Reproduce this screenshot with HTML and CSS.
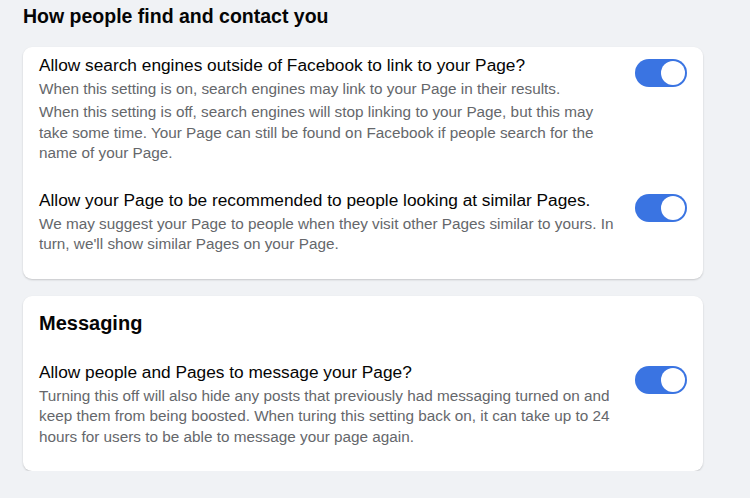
FILE: index.html
```html
<!DOCTYPE html>
<html>
<head>
<meta charset="utf-8">
<link rel="stylesheet" href="styles.css">
</head>
<body>
<div class="page">
  <h2 class="section-title">How people find and contact you</h2>
  <div class="card card-first">
    <div class="row">
      <div class="text">
        <div class="title">Allow search engines outside of Facebook to link to your Page?</div>
        <p class="desc">When this setting is on, search engines may link to your Page in their results.</p>
        <p class="desc desc-gap">When this setting is off, search engines will stop linking to your Page, but this may take some time. Your Page can still be found on Facebook if people search for the name of your Page.</p>
      </div>
      <div class="toggle"><span class="knob"></span></div>
    </div>
    <div class="row">
      <div class="text">
        <div class="title">Allow your Page to be recommended to people looking at similar Pages.</div>
        <p class="desc">We may suggest your Page to people when they visit other Pages similar to yours. In turn, we'll show similar Pages on your Page.</p>
      </div>
      <div class="toggle"><span class="knob"></span></div>
    </div>
  </div>
  <div class="card card-second">
    <h3 class="card-heading">Messaging</h3>
    <div class="row">
      <div class="text">
        <div class="title">Allow people and Pages to message your Page?</div>
        <p class="desc">Turning this off will also hide any posts that previously had messaging turned on and keep them from being boosted. When turing this setting back on, it can take up to 24 hours for users to be able to message your page again.</p>
      </div>
      <div class="toggle"><span class="knob"></span></div>
    </div>
  </div>
</div>
</body>
</html>
```

FILE: styles.css
```css
html, body {
  margin: 0;
  padding: 0;
  background: #f0f2f5;
  font-family: "Liberation Sans", Arial, sans-serif;
  color: #050505;
}
.page {
  padding: 4px 47px 0 23px;
  display: flex;
  flex-direction: column;
}
.section-title {
  margin: 0;
  font-size: 19.5px;
  line-height: 24px;
  font-weight: 700;
}
.card {
  background: #fff;
  border-radius: 9px;
  box-shadow: 0 1px 2px rgba(0, 0, 0, 0.18);
  display: flex;
  flex-direction: column;
}
.card-first {
  margin-top: 19px;
  padding: 6px 16px 24px 16px;
  gap: 24px;
}
.card-second {
  margin-top: 17px;
  padding: 15px 16px 24px 16px;
  gap: 25px;
}
.card-heading {
  margin: 0;
  font-size: 20px;
  line-height: 24px;
  font-weight: 700;
}
.row {
  display: flex;
  align-items: flex-start;
  justify-content: space-between;
}
.text {
  width: 584px;
}
.title {
  font-size: 17.3px;
  line-height: 24px;
}
.desc {
  margin: 2px 0 0 0;
  font-size: 15.3px;
  line-height: 20.5px;
  color: #65676b;
}
.desc-gap {
  margin-top: 2.5px;
}
.toggle {
  margin-top: 6px;
  width: 52px;
  height: 28px;
  border-radius: 14px;
  background: #3a74e2;
  position: relative;
  flex-shrink: 0;
}
.knob {
  position: absolute;
  right: 2px;
  top: 2px;
  width: 24px;
  height: 24px;
  border-radius: 50%;
  background: #fff;
}
```
